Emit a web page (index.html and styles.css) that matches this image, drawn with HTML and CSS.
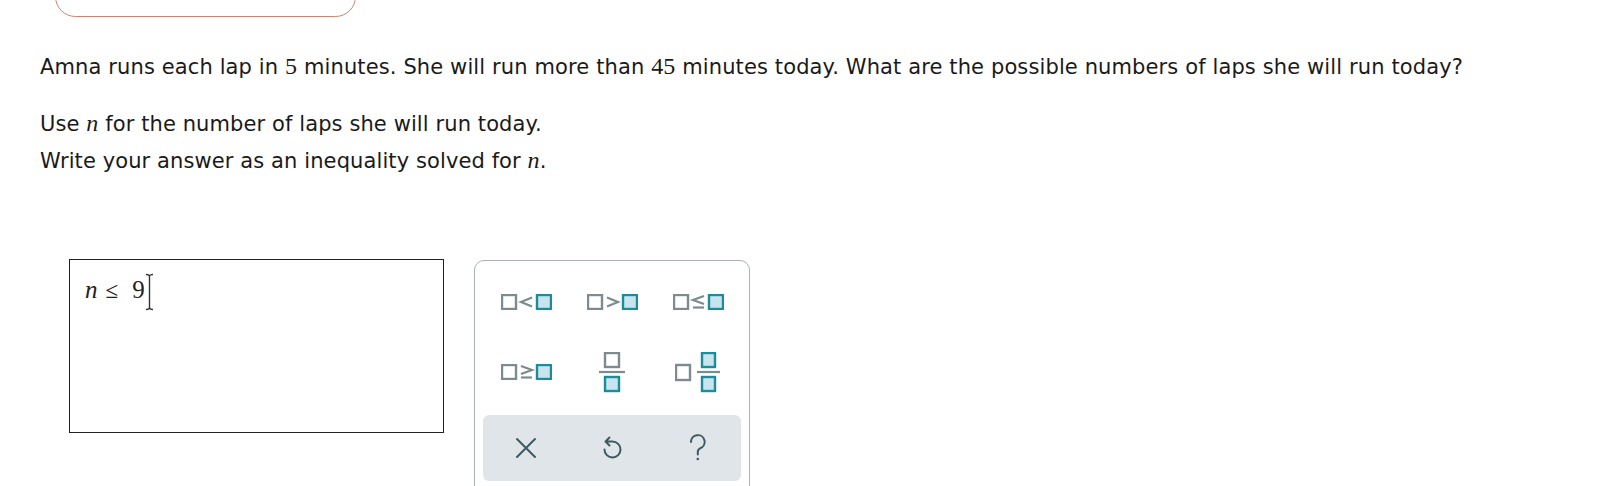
FILE: index.html
```html
<!DOCTYPE html>
<html>
<head>
<meta charset="utf-8">
<link rel="stylesheet" href="styles.css">
</head>
<body>
<div class="top-btn"></div>
<div class="question">
  <p class="q-line">Amna runs each lap in <span class="num">5</span> minutes. She will run more than <span class="num">45</span> minutes today. What are the possible numbers of laps she will run today?</p>
  <p class="q-inst">Use <span class="var">n</span> for the number of laps she will run today.<br>Write your answer as an inequality solved for <span class="var">n</span>.</p>
</div>
<div class="answer-row">
  <div class="answer-box">
    <span class="math"><span class="mvar">n</span><span class="mop">≤</span><span class="mnum">9</span></span>
    <svg class="ibeam" width="9" height="38" viewBox="0 0 9 38"><path d="M1 1.5 Q4.5 1.5 4.5 3.5 Q4.5 1.5 8 1.5 M4.5 3.5 V34.5 M1 36.5 Q4.5 36.5 4.5 34.5 Q4.5 36.5 8 36.5" fill="none" stroke="#333" stroke-width="1.4"/></svg>
  </div>
  <div class="keypad">
    <div class="keys">
      <div class="key">
        <svg width="51" height="16" viewBox="0 0 51 16"><rect x="1" y="1" width="14" height="14" class="g"/><polyline points="31,3.5 20,8 31,12.5" class="gl"/><rect x="36" y="1" width="14" height="14" class="t"/></svg>
      </div>
      <div class="key">
        <svg width="51" height="16" viewBox="0 0 51 16"><rect x="1" y="1" width="14" height="14" class="g"/><polyline points="20,3.5 31,8 20,12.5" class="gl"/><rect x="36" y="1" width="14" height="14" class="t"/></svg>
      </div>
      <div class="key">
        <svg width="51" height="16" viewBox="0 0 51 16"><rect x="1" y="1" width="14" height="14" class="g"/><polyline points="31,2 20,6 31,10" class="gl"/><line x1="20" y1="13.5" x2="31" y2="13.5" class="gl"/><rect x="36" y="1" width="14" height="14" class="t"/></svg>
      </div>
      <div class="key">
        <svg width="51" height="16" viewBox="0 0 51 16"><rect x="1" y="1" width="14" height="14" class="g"/><polyline points="20,2 31,6 20,10" class="gl"/><line x1="20" y1="13.5" x2="31" y2="13.5" class="gl"/><rect x="36" y="1" width="14" height="14" class="t"/></svg>
      </div>
      <div class="key">
        <svg width="28" height="41" viewBox="0 0 28 41"><rect x="7" y="1" width="14" height="14" class="g"/><line x1="1" y1="20" x2="27" y2="20" class="gl"/><rect x="7" y="25" width="14" height="14" class="t"/></svg>
      </div>
      <div class="key">
        <svg width="46" height="41" viewBox="0 0 46 41"><rect x="1" y="13" width="14" height="15" class="g"/><rect x="27" y="1" width="13" height="14" class="t"/><line x1="22" y1="20" x2="45" y2="20" class="gl"/><rect x="27" y="25" width="13" height="14" class="t"/></svg>
      </div>
    </div>
    <div class="actions">
      <div class="act">
        <svg width="22" height="22" viewBox="0 0 22 22"><path d="M2 2 L20 20 M20 2 L2 20" class="ic"/></svg>
      </div>
      <div class="act">
        <svg width="22" height="25" viewBox="0 0 22 25"><path d="M8.5 1.5 L4.5 5.5 L8.5 9.5 M4.5 5.5 H11.5 A8 8 0 1 1 3.5 13.5" class="ic"/></svg>
      </div>
      <div class="act">
        <svg width="20" height="28" viewBox="0 0 20 28"><path d="M3 8 A6.8 6.8 0 1 1 12.2 14.3 C10.6 15 9.8 16.2 9.8 18 V20.5" class="ic"/><circle cx="9.8" cy="25" r="1.3" fill="#3d5a62"/></svg>
      </div>
    </div>
  </div>
</div>
</body>
</html>
```

FILE: styles.css
```css
html, body {
  margin: 0;
  padding: 0;
  background: #ffffff;
}

body {
  font-family: "DejaVu Sans", Verdana, sans-serif;
  color: #1a1a1a;
  width: 1610px;
  height: 486px;
  overflow: hidden;
}

.top-btn {
  box-sizing: border-box;
  width: 301px;
  height: 41px;
  margin-top: -24px;
  margin-left: 55px;
  border: 1px solid #c98473;
  border-radius: 21px;
}

.question {
  padding-left: 40px;
  margin-top: 31px;
}

.q-line {
  margin: 0;
  font-size: 21px;
  letter-spacing: 0.12px;
  line-height: 36px;
}

.q-inst {
  margin: 20px 0 0 0;
  font-size: 21px;
  letter-spacing: 0.1px;
  line-height: 36px;
}

.num {
  font-family: "Liberation Serif", "Times New Roman", serif;
  font-size: 24px;
}

.var {
  font-family: "Liberation Serif", "Times New Roman", serif;
  font-style: italic;
  font-size: 24px;
}

.answer-row {
  display: flex;
  align-items: flex-start;
  margin-top: 80px;
  margin-left: 69px;
  gap: 30px;
}

.answer-box {
  position: relative;
  box-sizing: border-box;
  width: 375px;
  height: 174px;
  border: 1px solid #222;
  padding: 15px 15px;
}

.math {
  font-family: "Liberation Serif", "Times New Roman", serif;
  font-size: 25px;
  line-height: 30px;
  color: #222;
}

.mvar {
  font-style: italic;
}

.mop {
  display: inline-block;
  font-family: "DejaVu Sans", serif;
  font-weight: 200;
  font-size: 23px;
  line-height: 30px;
  margin: 0 14px 0 8px;
}

.ibeam {
  position: absolute;
  left: 75px;
  top: 13px;
}

.keypad {
  box-sizing: border-box;
  width: 276px;
  height: 240px;
  margin-top: 1px;
  border: 1px solid #a8b2b5;
  border-radius: 10px;
  padding: 6px 8px 0 8px;
}

.keys {
  display: grid;
  grid-template-columns: repeat(3, 1fr);
  grid-auto-rows: 70px;
}

.key {
  display: flex;
  align-items: center;
  justify-content: center;
}

.key svg .g {
  fill: none;
  stroke: #7d8b8f;
  stroke-width: 2.4;
}

.key svg .t {
  fill: #c8e5ee;
  stroke: #1b8c9c;
  stroke-width: 2.4;
}

.key svg .gl {
  fill: none;
  stroke: #7d8b8f;
  stroke-width: 2.2;
}

.actions {
  margin-top: 8px;
  height: 66px;
  background: #dfe5e8;
  border-radius: 6px;
  display: grid;
  grid-template-columns: repeat(3, 1fr);
}

.act {
  display: flex;
  align-items: center;
  justify-content: center;
}

.ic {
  fill: none;
  stroke: #3d5a62;
  stroke-width: 2;
  stroke-linecap: round;
  stroke-linejoin: round;
}
```
